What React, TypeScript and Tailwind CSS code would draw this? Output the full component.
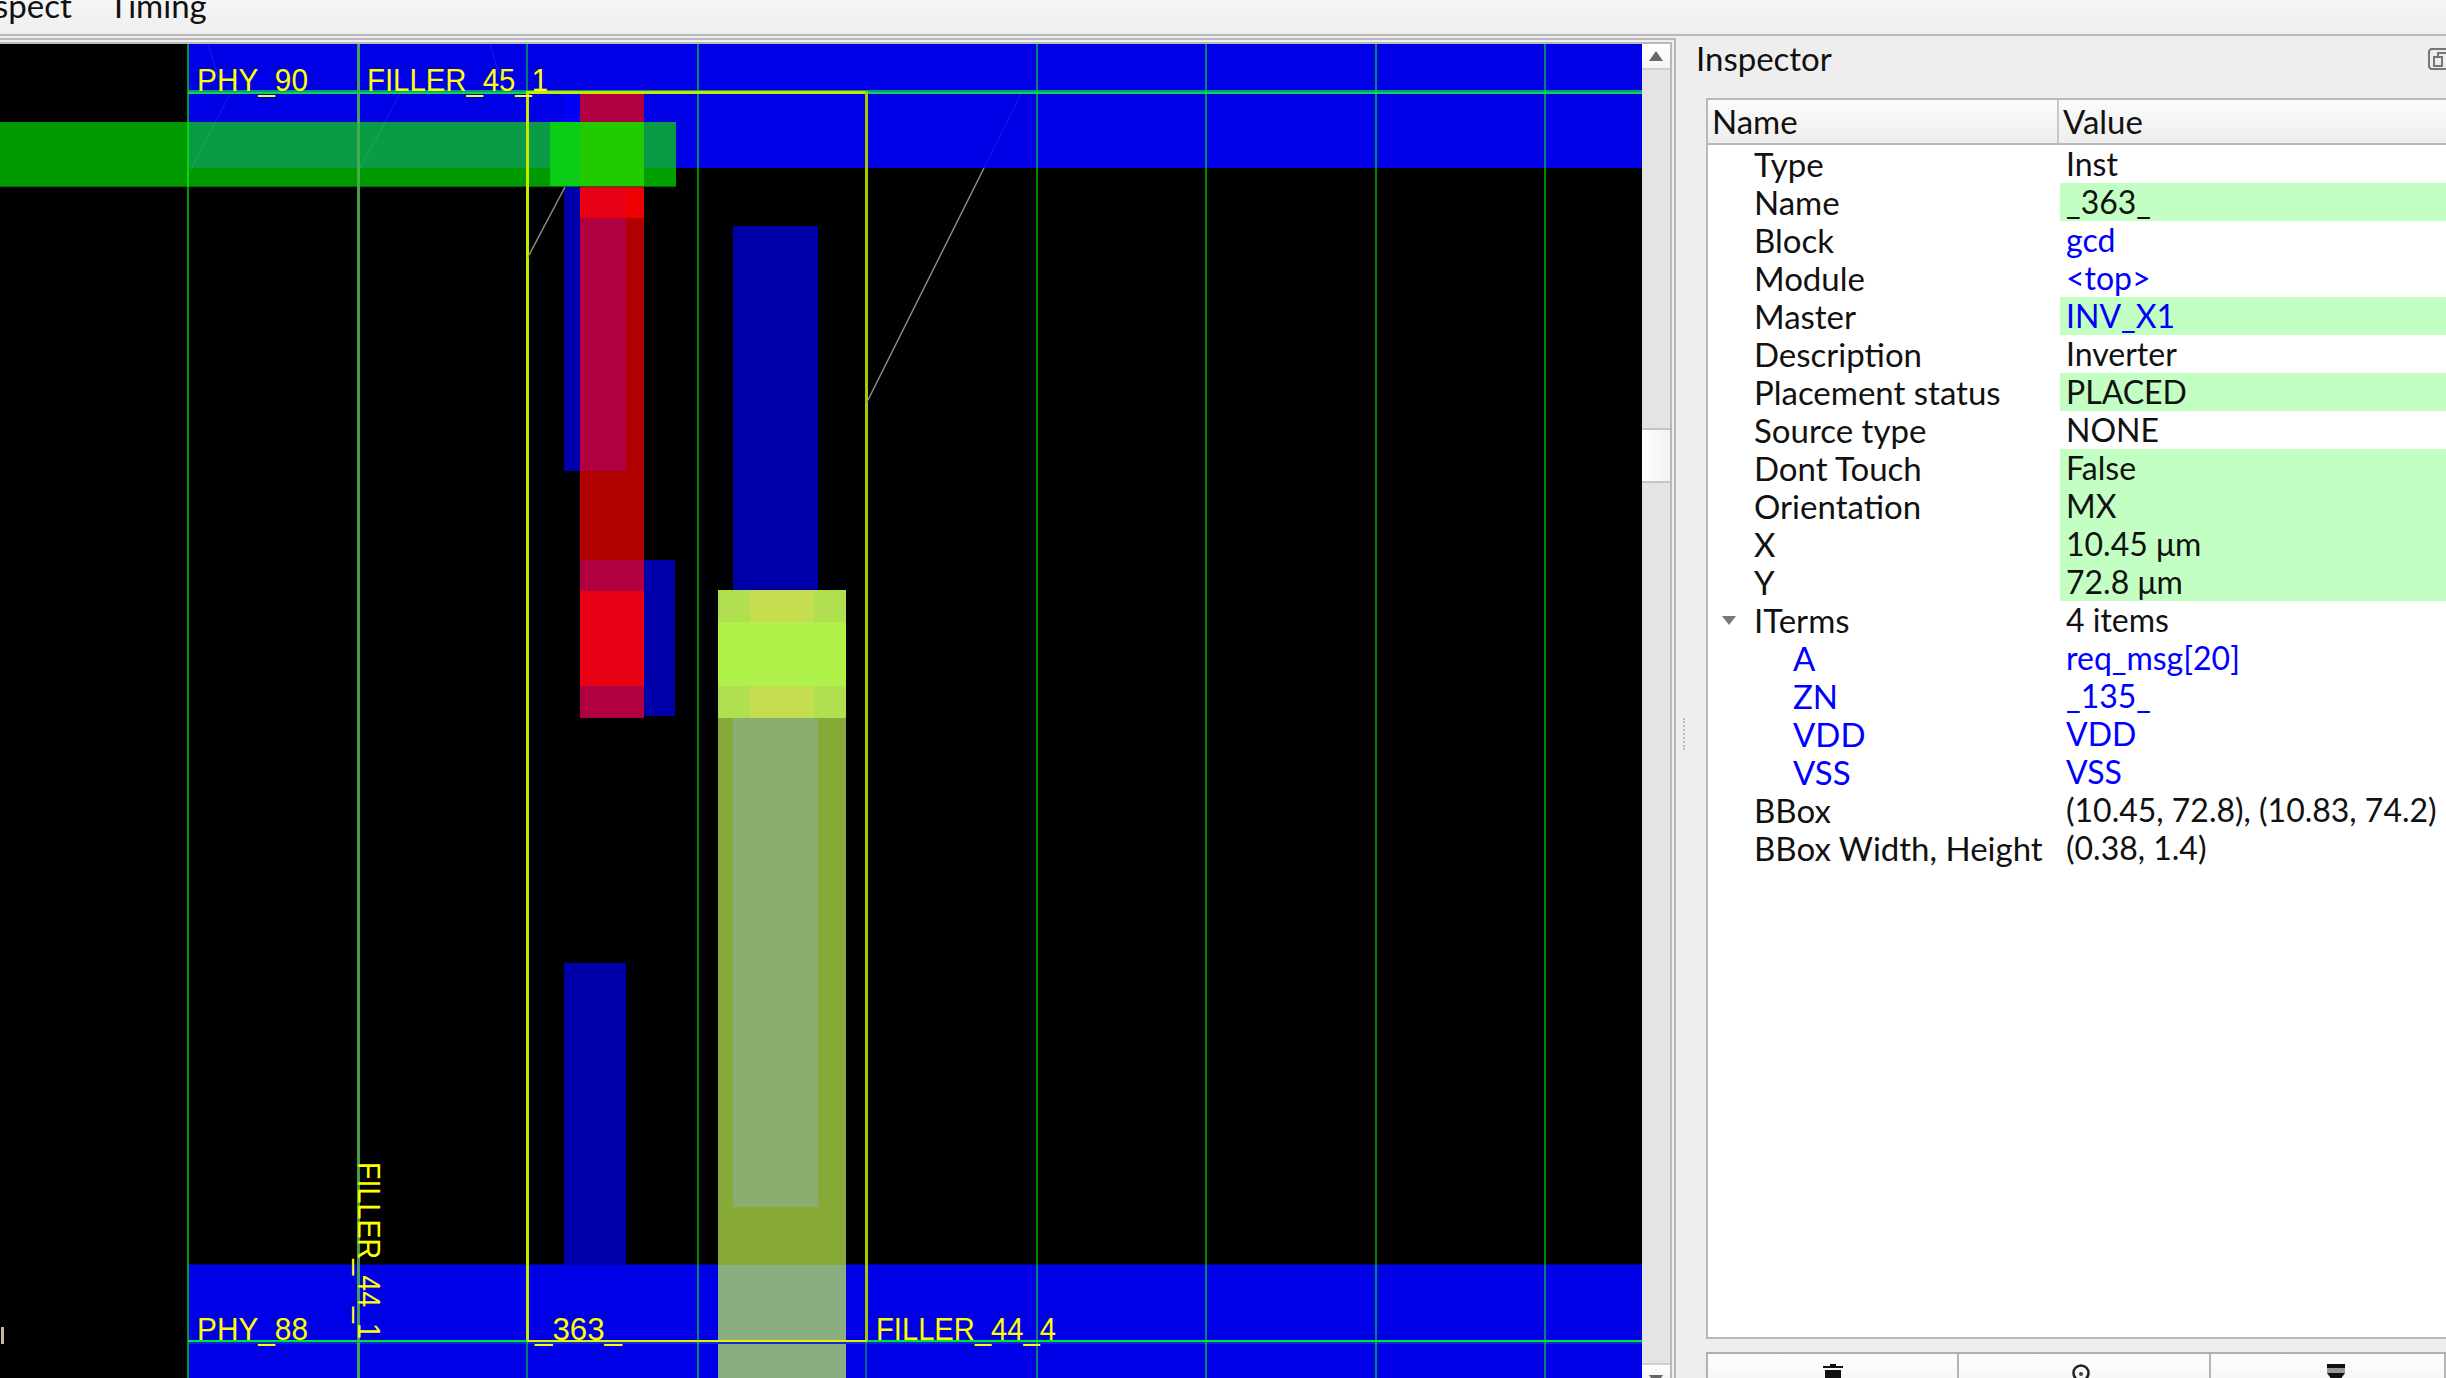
import React from "react";

type R = [number, number, number, number, string];

const rects: R[] = [
  // rails
  [188, 44, 1454, 124, "#0000e6"],
  [188, 1265, 1454, 113, "#0000e6"],
  [188, 1264, 1454, 1, "#000080"],
  // lower blue shapes
  [564, 168, 62, 303, "#0000aa"],
  [564, 94, 16, 74, "#0000f8"],
  [644, 560, 31, 156, "#0000aa"],
  [564, 963, 62, 302, "#0000aa"],
  [733, 226, 85, 364, "#0000aa"],
  // red column
  [580, 94, 64, 28, "#b00040"],
  [580, 187, 64, 31, "#e80014"],
  [626, 187, 18, 31, "#ec0000"],
  [580, 218, 46, 253, "#b00040"],
  [626, 218, 18, 253, "#b00000"],
  [580, 471, 64, 89, "#b00000"],
  [580, 560, 64, 31, "#b00040"],
  [580, 591, 64, 95, "#e80014"],
  [580, 686, 64, 32, "#b00040"],
  // green bar
  [0, 122, 188, 65, "#009900"],
  [188, 122, 362, 46, "#0a9b46"],
  [188, 168, 362, 19, "#009900"],
  [550, 122, 30, 65, "#0acc14"],
  [580, 122, 64, 65, "#20cc00"],
  [644, 122, 32, 46, "#0a9b46"],
  [644, 168, 32, 19, "#00a000"],
  [0, 186, 676, 1, "#0a6a0a"],
  // olive via
  [718, 590, 128, 32, "#b0e050"],
  [750, 590, 64, 32, "#c4de50"],
  [718, 622, 128, 64, "#aef24a"],
  [718, 686, 128, 32, "#b0e050"],
  [750, 686, 64, 32, "#c4de50"],
  [718, 718, 128, 547, "#88aa38"],
  [733, 718, 85, 489, "#8aad70"],
  [718, 1265, 128, 113, "#8aae80"],
];

function Label({ x, y, w, children }: { x: number; y: number; w: number; children: string }) {
  return (
    <text x={x} y={y} fontSize={32} fill="#ffff00" textLength={w} lengthAdjust="spacingAndGlyphs" fontFamily="'Liberation Sans', sans-serif">
      {children}
    </text>
  );
}

function LayoutView() {
  const thin = [1036, 1205, 1375, 1544, 697];
  return (
    <svg viewBox="0 44 1642 1334" className="block w-full h-full bg-black" preserveAspectRatio="none">
      <g shapeRendering="crispEdges">
        {rects.map((r, i) => (
          <rect key={i} x={r[0]} y={r[1]} width={r[2]} height={r[3]} fill={r[4]} />
        ))}
        {/* instance outline rows */}
        <rect x={188} y={90} width={1454} height={2} fill="#00a070" />
        <rect x={188} y={92} width={1454} height={2} fill="#10d060" />
        <rect x={188} y={1340} width={1454} height={2} fill="#00e040" />
        <rect x={188} y={1342} width={1454} height={2} fill="#0a30d0" />
        <rect x={187} y={44} width={2} height={1334} fill="#00ff00" opacity={0.6} />
        <rect x={357} y={44} width={3} height={1334} fill="#4caf50" opacity={0.9} />
        {thin.map((x) => (
          <rect key={x} x={x} y={44} width={2} height={1334} fill="#00ff00" opacity={0.52} />
        ))}
        {/* selected instance */}
        <rect x={527} y={91} width={340} height={3} fill="#c8e800" />
        <rect x={527} y={1340} width={340} height={2} fill="#e8f000" />
        <rect x={526} y={44} width={2} height={47} fill="#00ff00" opacity={0.5} />
        <rect x={526} y={1342} width={2} height={36} fill="#00ff00" opacity={0.5} />
        <rect x={865} y={1342} width={2} height={36} fill="#00ff00" opacity={0.4} />
        <rect x={526} y={91} width={3} height={1249} fill="#c8e800" />
        <rect x={865} y={91} width={3} height={1249} fill="#a8c800" />
      </g>
      <g stroke="#8a8a8a" strokeWidth={1.5} fill="none">
        <line x1={528} y1={257} x2={565} y2={187} />
        <line x1={867} y1={402} x2={984} y2={168} />
      </g>
      <g stroke="#ffffff" strokeOpacity={0.07} strokeWidth={1.5} fill="none">
        <line x1={984} y1={168} x2={1021} y2={94} />
        <line x1={188} y1={175} x2={230} y2={94} />
        <line x1={358} y1={172} x2={400} y2={94} />
        <line x1={208} y1={44} x2={222} y2={90} />
        <line x1={490} y1={44} x2={504} y2={90} />
      </g>
      <Label x={197} y={91} w={111}>PHY_90</Label>
      <Label x={367} y={91} w={181}>FILLER_45_1</Label>
      <Label x={197} y={1340} w={111}>PHY_88</Label>
      <Label x={535} y={1340} w={87}>_363_</Label>
      <Label x={876} y={1340} w={180}>FILLER_44_4</Label>
      <g transform="rotate(90 358 1162)">
        <Label x={358} y={1162} w={177}>FILLER_44_1</Label>
      </g>
      <rect x={1} y={1327} width={3} height={17} fill="#c8b4a4" />
    </svg>
  );
}

function Triangle({ down }: { down?: boolean }) {
  return (
    <svg width="18" height="12" viewBox="0 0 18 12" className="block">
      <path d={down ? "M2 1H16L9 11Z" : "M2 11H16L9 1Z"} fill="#666" />
    </svg>
  );
}

function ScrollBar() {
  return (
    <div className="w-[28px] flex flex-col bg-[#e4e4e4] shrink-0 overflow-hidden">
      <div className="h-[26px] shrink-0 bg-gradient-to-b from-white to-[#f4f4f4] border-b-2 border-[#cfcfcf] flex items-center justify-center">
        <Triangle />
      </div>
      <div className="h-[358px] shrink-0" />
      <div className="h-[55px] shrink-0 bg-gradient-to-r from-white to-[#f2f2f2] border-y-2 border-[#c4c4c4]" />
      <div className="flex-1" />
      <div className="h-[15px] shrink-0 bg-gradient-to-b from-white to-[#f4f4f4] border-t-2 border-[#cfcfcf] flex items-start justify-center pt-[9px]">
        <Triangle down />
      </div>
    </div>
  );
}

type Row = { n: string; v: string; hl?: boolean; nb?: boolean; vb?: boolean; child?: boolean; arrow?: boolean };
const rows: Row[] = [
  { n: "Type", v: "Inst" },
  { n: "Name", v: "_363_", hl: true },
  { n: "Block", v: "gcd", vb: true },
  { n: "Module", v: "<top>", vb: true },
  { n: "Master", v: "INV_X1", hl: true, vb: true },
  { n: "Description", v: "Inverter" },
  { n: "Placement status", v: "PLACED", hl: true },
  { n: "Source type", v: "NONE" },
  { n: "Dont Touch", v: "False", hl: true },
  { n: "Orientation", v: "MX", hl: true },
  { n: "X", v: "10.45 μm", hl: true },
  { n: "Y", v: "72.8 μm", hl: true },
  { n: "ITerms", v: "4 items", arrow: true },
  { n: "A", v: "req_msg[20]", child: true, nb: true, vb: true },
  { n: "ZN", v: "_135_", child: true, nb: true, vb: true },
  { n: "VDD", v: "VDD", child: true, nb: true, vb: true },
  { n: "VSS", v: "VSS", child: true, nb: true, vb: true },
  { n: "BBox", v: "(10.45, 72.8), (10.83, 74.2)" },
  { n: "BBox Width, Height", v: "(0.38, 1.4)" },
];

function TreeRow({ r }: { r: Row }) {
  return (
    <div className="flex h-[38px] shrink-0 leading-[37px]">
      <div className={`w-[352px] shrink-0 flex items-center whitespace-nowrap text-[33px] ${r.child ? "pl-[85px]" : "pl-[46px]"} ${r.nb ? "text-[#0000ff]" : "text-[#111111]"} relative`}>
        {r.arrow && (
          <svg width="14" height="9" viewBox="0 0 14 9" className="absolute left-[14px] top-[15px]">
            <path d="M0 0H14L7 9Z" fill="#777" />
          </svg>
        )}
        {r.n}
      </div>
      <div className={`flex-1 pl-[6px] whitespace-nowrap text-[32px] ${r.hl ? "bg-[#c3ffc3]" : ""} ${r.vb ? "text-[#0000ff]" : "text-[#111111]"}`}>
        {r.v}
      </div>
    </div>
  );
}

function ActionButton({ w, children }: { w: string; children: React.ReactNode }) {
  return (
    <div className={`${w} h-[26px] shrink-0 border-r-2 border-[#b5b5b5] bg-gradient-to-b from-white to-[#f6f6f6] flex justify-center pt-[10px] overflow-hidden`}>
      {children}
    </div>
  );
}

export default function App() {
  return (
    <div className="w-[2446px] h-[1378px] overflow-hidden flex flex-col bg-[#eeeeee] font-['Lato','Noto_Sans',sans-serif] text-[33px] text-[#111111]">
      <div className="h-[34px] shrink-0 bg-gradient-to-b from-[#f6f6f6] to-[#eeeeee] flex gap-[37px] overflow-hidden leading-[28px]">
        <span className="-mt-[9px] -ml-[6px]">spect</span>
        <span className="-mt-[9px]">Timing</span>
      </div>
      <div className="h-[2px] shrink-0 bg-[#b8b8b8]" />
      <div className="flex-1 flex min-h-0">
        <div className="shrink-0 pt-[2px] flex flex-col w-[1676px]">
          <div className="flex-1 border-t-2 border-r-2 border-[#b8b8b8] pt-[2px] pr-[2px] flex min-h-0">
            <div className="flex-1 border-t-2 border-r-2 border-[#b8b8b8] flex min-w-0">
              <div className="w-[1642px] shrink-0 h-full">
                <LayoutView />
              </div>
              <ScrollBar />
            </div>
          </div>
        </div>
        <div className="flex-1 min-w-0 flex flex-col">
          <div className="h-[62px] shrink-0 pl-[20px] flex justify-between items-start overflow-hidden">
            <span className="leading-[44px]">Inspector</span>
            <svg width="18" height="22" viewBox="0 0 18 22" className="mt-[12px] shrink-0">
              <path d="M18 1H3L1 3V19L3 21H18" fill="none" stroke="#777" strokeWidth="2" />
              <rect x="6" y="9" width="8" height="9" fill="none" stroke="#777" strokeWidth="2" />
              <path d="M10 9V5H18" fill="none" stroke="#777" strokeWidth="2" />
            </svg>
          </div>
          <div className="flex-1 flex min-h-0">
            <div className="w-[30px] shrink-0 pt-[620px]">
              <div className="ml-[7px] h-[32px] border-l-2 border-dotted border-[#bdbdbd]" />
            </div>
            <div className="flex-1 min-w-0 flex flex-col overflow-hidden">
              <div className="h-[1241px] shrink-0 bg-white border-2 border-r-0 border-[#b8b8b8] flex flex-col">
                <div className="h-[45px] shrink-0 bg-gradient-to-b from-[#fbfbfb] to-[#eeeeee] border-b-2 border-[#b8b8b8] flex leading-[42px]">
                  <div className="w-[351px] shrink-0 border-r-2 border-[#c8c8c8] pl-[4px]">Name</div>
                  <div className="pl-[4px]">Value</div>
                </div>
                {rows.map((r) => (
                  <TreeRow key={r.n} r={r} />
                ))}
              </div>
              <div className="h-[13px] shrink-0" />
              <div className="flex border-t-2 border-l-2 border-[#b0b0b0]">
                <ActionButton w="w-[251px]">
                  <svg width="20" height="16" viewBox="0 0 20 16" className="shrink-0">
                    <path d="M7 0H13V2H20V4H0V2H7Z" fill="#111" />
                    <rect x="2" y="6" width="16" height="10" fill="#111" />
                  </svg>
                </ActionButton>
                <ActionButton w="w-[252px] pr-[6px]">
                  <svg width="18" height="16" viewBox="0 0 18 16" className="shrink-0">
                    <circle cx="9" cy="9" r="7.5" fill="none" stroke="#222" strokeWidth="2.5" />
                    <circle cx="9" cy="10" r="2" fill="#444" />
                  </svg>
                </ActionButton>
                <ActionButton w="flex-1 pl-[16px]">
                  <svg width="18" height="16" viewBox="0 0 18 16" className="shrink-0">
                    <rect x="0" y="0" width="18" height="4" fill="#111" />
                    <rect x="0" y="4" width="18" height="5" fill="#999" />
                    <path d="M0 9H18L13 16H5Z" fill="#111" />
                  </svg>
                </ActionButton>
              </div>
            </div>
          </div>
        </div>
      </div>
    </div>
  );
}
